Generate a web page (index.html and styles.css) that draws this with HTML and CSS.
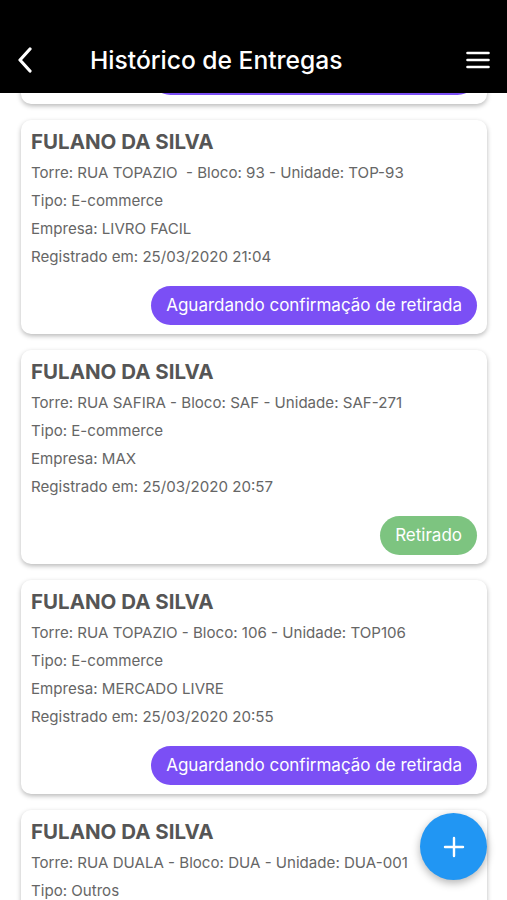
FILE: index.html
```html
<!DOCTYPE html>
<html lang="pt-BR">
<head>
  <meta charset="UTF-8" />
  <meta name="viewport" content="width=device-width, initial-scale=1.0" />
  <title>Histórico de Entregas</title>
  <link rel="stylesheet" href="styles.css">
</head>
<body>
  <!-- Barra superior -->
  <header class="topbar">
    <button class="icon-btn back" aria-label="Voltar">
      <svg width="18" height="26" viewBox="0 0 18 26"><path d="M14 2 L4 13 L14 24" fill="none" stroke="#fff" stroke-width="3.2" stroke-linecap="round" stroke-linejoin="round"/></svg>
    </button>
    <h1>Histórico de Entregas</h1>
    <button class="icon-btn menu" aria-label="Menu">
      <svg width="24" height="20" viewBox="0 0 24 20"><path d="M1.5 3 H22.5 M1.5 10 H22.5 M1.5 17 H22.5" stroke="#fff" stroke-width="2.6" stroke-linecap="round"/></svg>
    </button>
  </header>

  <!-- Lista de entregas -->
  <main class="feed">
    <div class="list">
      <div class="card">
        <h2>FULANO DA SILVA</h2>
        <p>Torre: RUA TOPAZIO - Bloco: 12 - Unidade: TOP-12</p>
        <p>Tipo: E-commerce</p>
        <p>Empresa: CORREIOS</p>
        <p>Registrado em: 25/03/2020 21:10</p>
        <div class="status-row"><span class="status waiting">Aguardando confirmação de retirada</span></div>
      </div>

      <div class="card">
        <h2>FULANO DA SILVA</h2>
        <p>Torre: RUA TOPAZIO &nbsp;- Bloco: 93 - Unidade: TOP-93</p>
        <p>Tipo: E-commerce</p>
        <p>Empresa: LIVRO FACIL</p>
        <p>Registrado em: 25/03/2020 21:04</p>
        <div class="status-row"><span class="status waiting">Aguardando confirmação de retirada</span></div>
      </div>

      <div class="card">
        <h2>FULANO DA SILVA</h2>
        <p>Torre: RUA SAFIRA - Bloco: SAF - Unidade: SAF-271</p>
        <p>Tipo: E-commerce</p>
        <p>Empresa: MAX</p>
        <p>Registrado em: 25/03/2020 20:57</p>
        <div class="status-row"><span class="status done">Retirado</span></div>
      </div>

      <div class="card">
        <h2>FULANO DA SILVA</h2>
        <p>Torre: RUA TOPAZIO - Bloco: 106 - Unidade: TOP106</p>
        <p>Tipo: E-commerce</p>
        <p>Empresa: MERCADO LIVRE</p>
        <p>Registrado em: 25/03/2020 20:55</p>
        <div class="status-row"><span class="status waiting">Aguardando confirmação de retirada</span></div>
      </div>

      <div class="card">
        <h2>FULANO DA SILVA</h2>
        <p>Torre: RUA DUALA - Bloco: DUA - Unidade: DUA-001</p>
        <p>Tipo: Outros</p>
        <p>Empresa: LOJA</p>
        <p>Registrado em: 25/03/2020 20:40</p>
        <div class="status-row"><span class="status done">Retirado</span></div>
      </div>
    </div>
  </main>

  <!-- Botão flutuante -->
  <button class="fab" aria-label="Nova entrega">
    <svg width="22" height="22" viewBox="0 0 22 22"><path d="M11 2 V20 M2 11 H20" stroke="#fff" stroke-width="2.4" stroke-linecap="round"/></svg>
  </button>
</body>
</html>
```

FILE: styles.css
```css
/* Reset */
* {
  margin: 0;
  padding: 0;
  box-sizing: border-box;
}

html, body {
  font-family: Inter, 'Liberation Sans', Arial, sans-serif;
  background: #fff;
  height: 100%;
  overflow: hidden;
}

.topbar {
  height: 93px;
  background: #000;
  color: #fff;
  display: flex;
  align-items: center;
  padding: 27px 17px 0 16px;
  position: relative;
  z-index: 2;
}

.icon-btn {
  background: none;
  border: none;
  display: flex;
  align-items: center;
  justify-content: center;
}

.back {
  width: 26px;
  height: 30px;
  justify-content: flex-start;
}

.topbar h1 {
  font-size: 24.6px;
  font-weight: 500;
  margin-left: 48px;
  flex: 1;
}

.menu {
  width: 24px;
  height: 24px;
}

.feed {
  height: 807px;
  overflow: hidden;
}

.list {
  display: flex;
  flex-direction: column;
  gap: 16px;
  padding: 0 20px 0 21px;
  margin-top: -203px;
}

.card {
  background: #fff;
  border-radius: 10px;
  box-shadow: 0 2px 5px rgba(0,0,0,0.28);
  padding: 10px 10px 9px 10px;
  height: 214px;
}

.card h2 {
  font-size: 20.5px;
  line-height: 24px;
  font-weight: 700;
  color: #555;
  margin-bottom: 5px;
}

.card p {
  font-size: 15.1px;
  line-height: 28px;
  color: #666;
}

.status-row {
  display: flex;
  justify-content: flex-end;
  margin-top: 15px;
}

.status {
  height: 39px;
  line-height: 39px;
  border-radius: 20px;
  padding: 0 15px;
  font-size: 17px;
  color: #fff;
}

.waiting {
  background: #7b4ff5;
}

.done {
  background: #7dc480;
}

.fab {
  position: fixed;
  right: 20px;
  top: 813px;
  width: 67px;
  height: 67px;
  border-radius: 50%;
  border: none;
  background: #2196f3;
  box-shadow: 0 3px 8px rgba(0,0,0,0.3);
  display: flex;
  align-items: center;
  justify-content: center;
  z-index: 3;
}
```
